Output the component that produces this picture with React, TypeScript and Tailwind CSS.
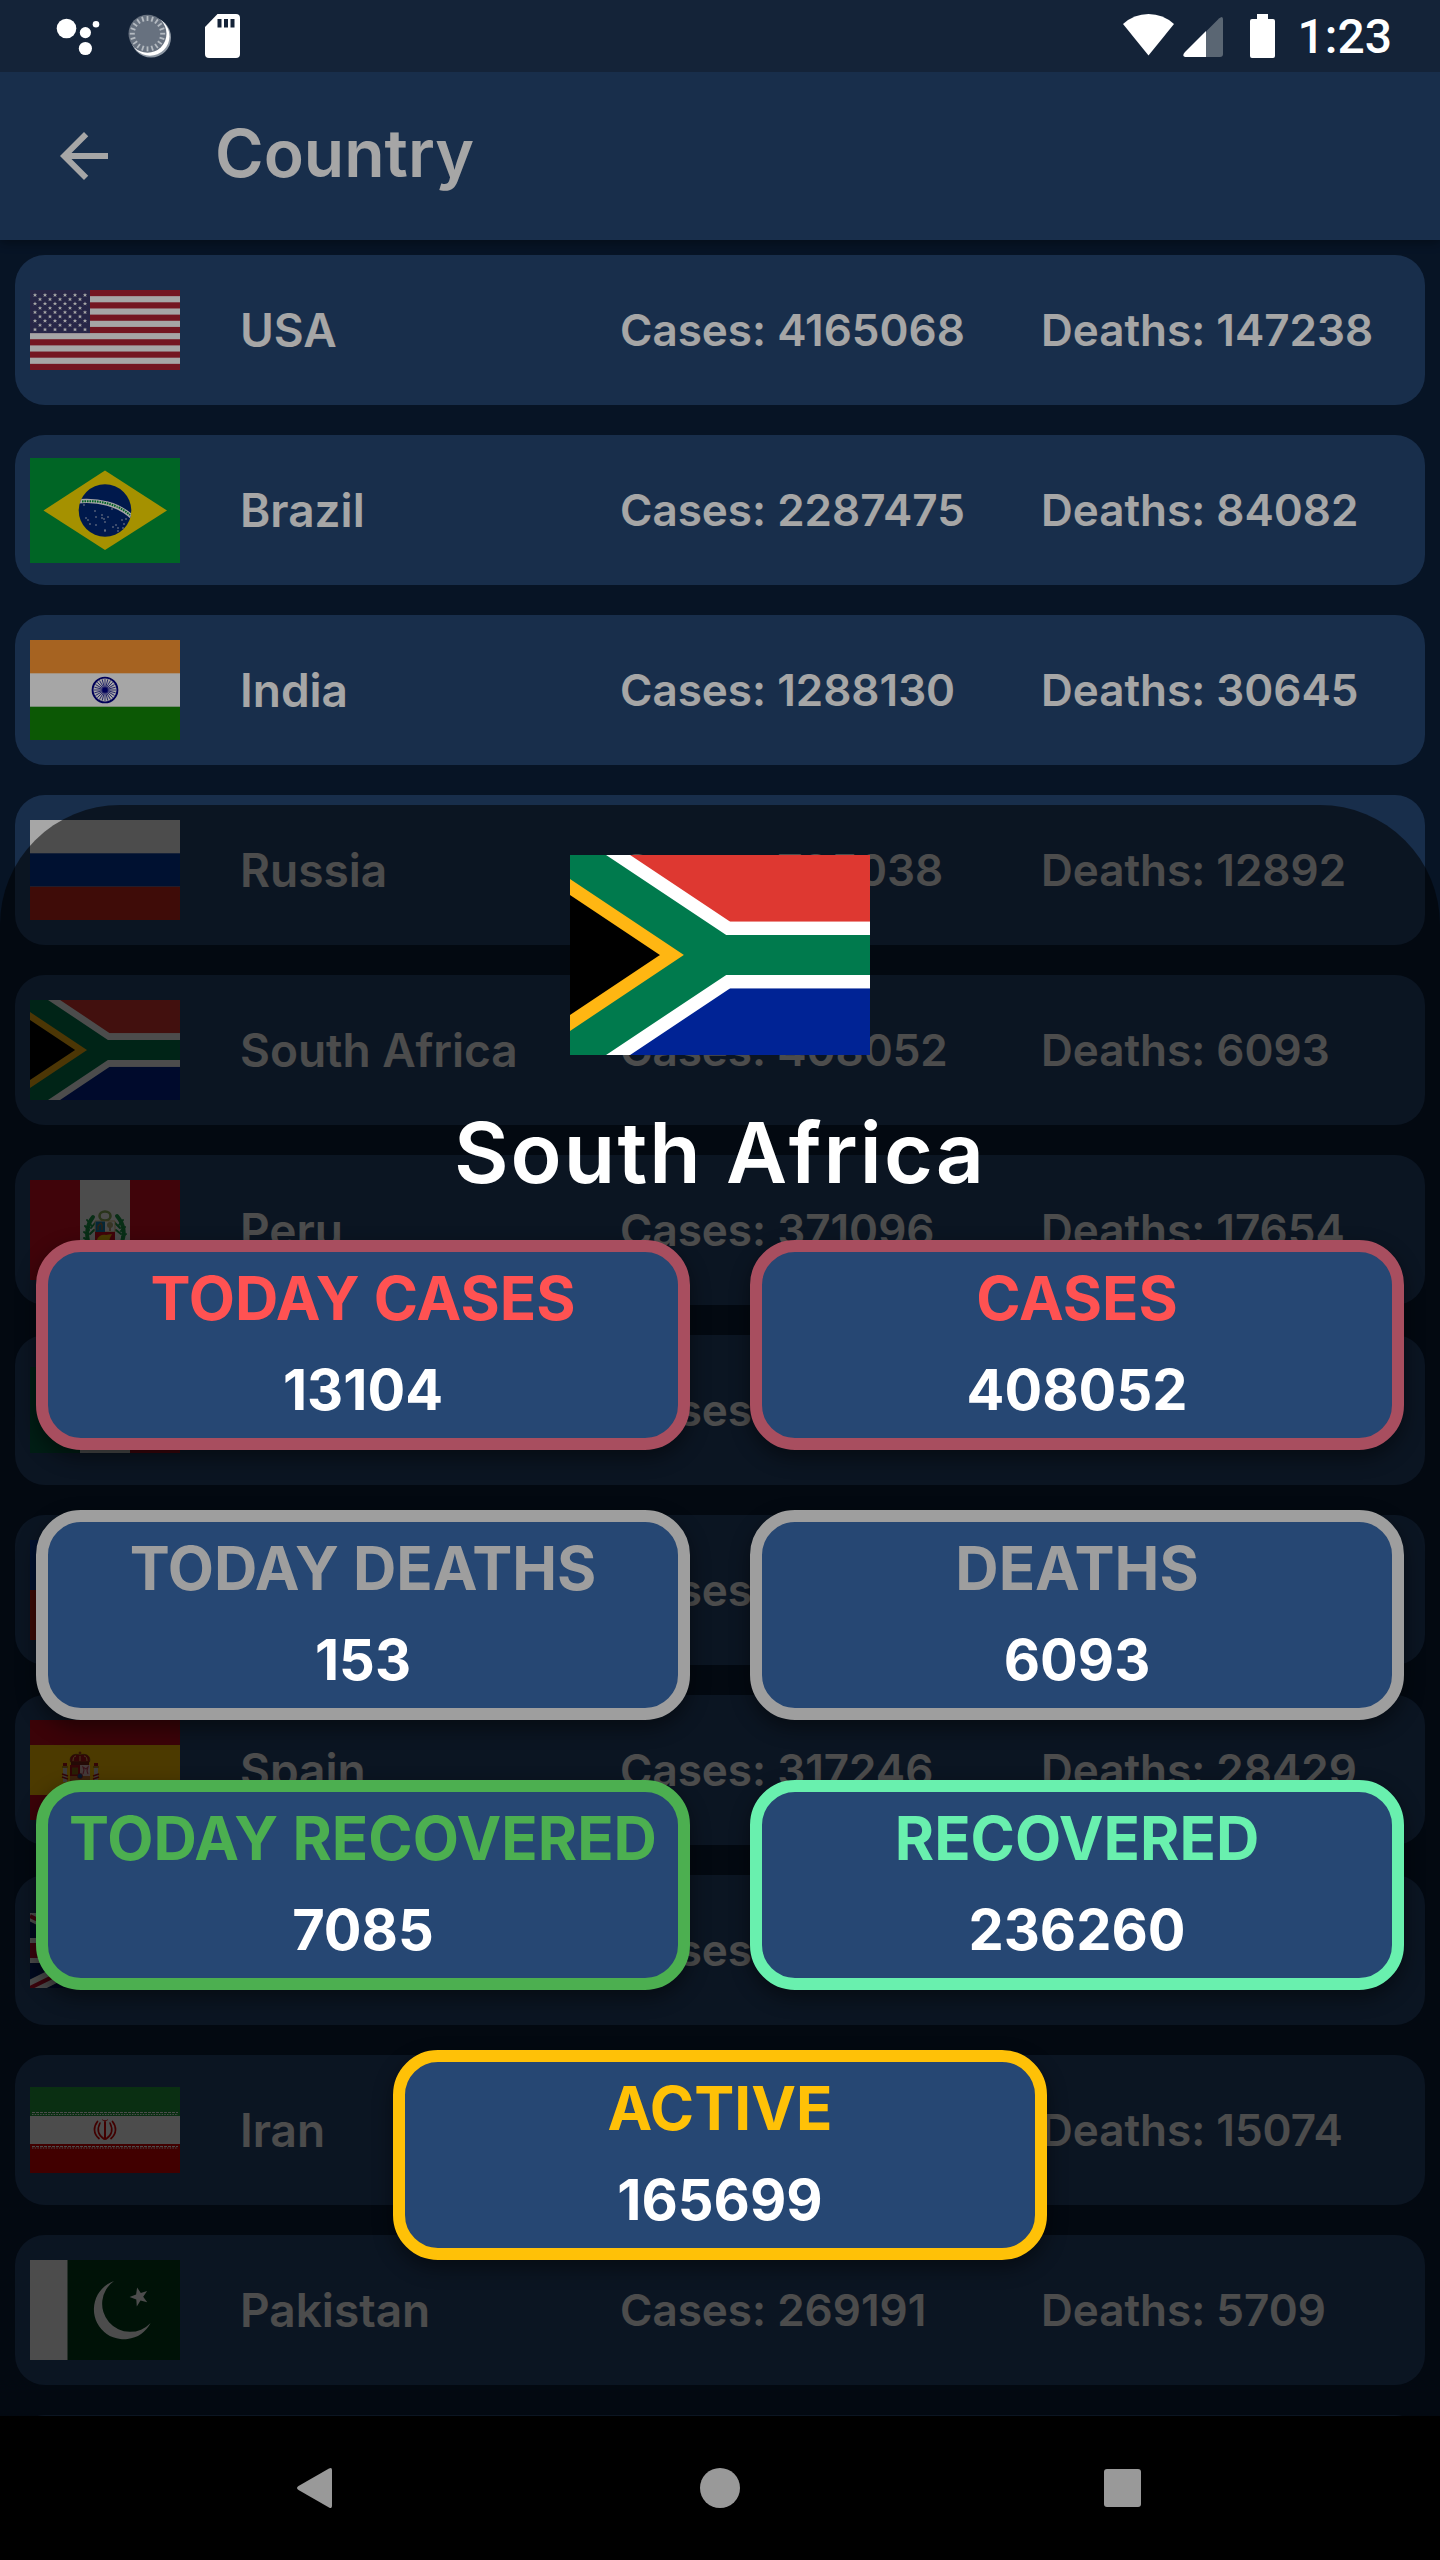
import React from "react";

type Country = {
  name: string;
  cases: number;
  deaths: number;
  flag: React.ReactNode;
};

function Flag({ height, children }: { height: number; children: React.ReactNode }) {
  return (
    <svg
      className="w-[150px] shrink-0"
      viewBox={`0 0 150 ${height}`}
      height={height}
      aria-hidden="true"
    >
      {children}
    </svg>
  );
}

function UsaFlag() {
  const stripe = 80 / 13;
  const stars: React.ReactNode[] = [];
  for (let row = 0; row < 9; row++) {
    const count = row % 2 === 0 ? 6 : 5;
    for (let col = 0; col < count; col++) {
      const x = 5 + col * 10 + (row % 2 === 0 ? 0 : 5);
      const y = 5 + row * 4.3;
      stars.push(
        <path
          key={`${row}-${col}`}
          d={`M${x} ${y - 2}l.6 1.3h1.4l-1 1 .5 1.6-1.5-.9-1.5.9.5-1.6-1-1h1.4z`}
          fill="#fff"
        />
      );
    }
  }
  return (
    <Flag height={80}>
      <rect width="150" height="80" fill="#fff" />
      {[0, 2, 4, 6, 8, 10, 12].map((i) => (
        <rect key={i} y={i * stripe} width="150" height={stripe} fill="#b22234" />
      ))}
      <rect width="60" height={stripe * 7} fill="#3c3b6e" />
      {stars}
    </Flag>
  );
}

const brazilStars = [
  [54, 47], [56, 60], [58, 62], [65, 53], [66, 59], [60, 66], [66, 67], [72, 57], [74, 61], [78, 59],
  [75, 64], [75, 72], [75, 73], [82, 51], [87, 48], [83, 69], [86, 67], [88, 70], [92, 62], [94, 66],
  [96, 61], [88, 73], [72, 60], [93, 70],
];

function BrazilFlag() {
  return (
    <Flag height={105}>
      <rect width="150" height="105" fill="#009b3a" />
      <path d="M75 12.5 137 52.5 75 92 13.5 52.5z" fill="#fedf00" />
      <clipPath id="globe">
        <circle cx="75" cy="52.5" r="26.3" />
      </clipPath>
      <circle cx="75" cy="52.5" r="26.3" fill="#002776" />
      <g clipPath="url(#globe)">
        <path d="M46 43.5C68 41 89 46 103 60" fill="none" stroke="#fff" strokeWidth="4.4" />
        <path
          d="M52 43.4C69 42 88 46 100 57"
          fill="none"
          stroke="#009b3a"
          strokeWidth="2"
          strokeDasharray="1.6 .9"
        />
      </g>
      {brazilStars.map(([x, y]) => (
        <circle key={`${x}-${y}`} cx={x} cy={y} r=".7" fill="#fff" />
      ))}
    </Flag>
  );
}

function IndiaFlag() {
  return (
    <Flag height={100}>
      <rect width="150" height="100" fill="#fff" />
      <rect width="150" height="33.3" fill="#ff9933" />
      <rect y="66.7" width="150" height="33.3" fill="#138808" />
      <g stroke="#000088" fill="none">
        <circle cx="75" cy="50" r="12.4" strokeWidth="1.9" />
        {Array.from({ length: 24 }, (_, i) => (
          <path key={i} d="M75 50V39" strokeWidth=".7" transform={`rotate(${i * 15} 75 50)`} />
        ))}
      </g>
      <circle cx="75" cy="50" r="2.6" fill="#000088" />
    </Flag>
  );
}

function RussiaFlag() {
  return (
    <Flag height={100}>
      <rect width="150" height="100" fill="#fff" />
      <rect y="33.3" width="150" height="33.4" fill="#0039a6" />
      <rect y="66.7" width="150" height="33.3" fill="#d52b1e" />
    </Flag>
  );
}

function SouthAfricaArt() {
  return (
    <>
      <clipPath id="hoist">
        <path d="M0 0 45 30 0 60z" />
      </clipPath>
      <rect width="90" height="30" fill="#de3831" />
      <rect y="30" width="90" height="30" fill="#002395" />
      <path d="M0 0 45 30 0 60z" fill="#000" />
      <g fill="none" stroke="#fff" strokeWidth="20">
        <path d="M-9-6 45 30H92" />
        <path d="M-9 66 45 30H92" />
      </g>
      <path
        d="M-9-6 45 30-9 66"
        fill="#000"
        stroke="#ffb612"
        strokeWidth="20"
        clipPath="url(#hoist)"
      />
      <path d="M-9-6 45 30H92M-9 66 45 30" fill="none" stroke="#007a4d" strokeWidth="12" />
    </>
  );
}

function SouthAfricaFlag() {
  return (
    <svg className="h-[100px] w-[150px] shrink-0" viewBox="0 0 90 60" aria-hidden="true">
      <SouthAfricaArt />
    </svg>
  );
}

function PeruFlag() {
  return (
    <Flag height={100}>
      <rect width="150" height="100" fill="#d91023" />
      <rect x="50" width="50" height="100" fill="#fff" />
      <g fill="none" stroke="#1c9a4a" strokeLinecap="round">
        <path d="M63 37c-5 6-8 16-4 27" strokeWidth="4" />
        <path d="M87 36c6 7 9 17 4 28" strokeWidth="4" />
        <path
          d="M57 40l4 5M55 46l4 4M54 52l4 3M54 58l4 2M65 43l-4 5M64 50l-4 4M93 40l-4 5M95 47l-4 4M96 54l-4 3M85 43l5 5M86 50l5 4"
          strokeWidth="2"
        />
      </g>
      <ellipse cx="75" cy="36" rx="5.5" ry="4.5" fill="none" stroke="#8cae5c" strokeWidth="2.6" />
      <path d="M65 41h20v11H65z" fill="#fff" stroke="#d8b25c" strokeWidth=".8" />
      <path d="M65.500 41.500H75V52h-9.500z" fill="#1383b8" />
      <path d="M68 50v-4l3-3 1 2v5" fill="none" stroke="#a9713a" strokeWidth="1.3" />
      <path d="M80 51v-7" stroke="#9a6b35" strokeWidth="1.2" />
      <circle cx="80" cy="45" r="3" fill="#b9b27a" />
      <path d="M65 52h20v8c0 6-6 9-10 10-4-1-10-4-10-10z" fill="#d91023" />
      <path d="M67 60c1-4 5-6 9-5l6-1-2 4c-1 4-4 6-8 6-3 0-5-1-5-4z" fill="#f4c20d" />
    </Flag>
  );
}

function MexicoFlag() {
  return (
    <Flag height={86}>
      <rect width="50" height="86" fill="#006847" />
      <rect x="50" width="50" height="86" fill="#fff" />
      <rect x="100" width="50" height="86" fill="#ce1126" />
      <circle cx="75" cy="43" r="10" fill="none" stroke="#7b5a33" strokeWidth="3" />
    </Flag>
  );
}

function ChileFlag() {
  return (
    <Flag height={100}>
      <rect width="150" height="50" fill="#fff" />
      <rect y="50" width="150" height="50" fill="#d52b1e" />
      <rect width="50" height="50" fill="#0039a6" />
      <path d="M25 13l3 8.500h9l-7 5.500 2.500 8.500-7.500-5-7.500 5L20 27l-7-5.500h9z" fill="#fff" />
    </Flag>
  );
}

function SpainFlag() {
  return (
    <Flag height={100}>
      <rect width="150" height="100" fill="#c60b1e" />
      <rect y="25" width="150" height="50" fill="#ffc400" />
      <path d="M50 31.500v3M48.600 33h2.800" stroke="#8f1e1a" strokeWidth="1" />
      <path d="M40.500 42c-2-7 5-9 9.500-7 4.500-2 11.500 0 9.500 7z" fill="#ad1519" stroke="#6b4a12" strokeWidth=".7" />
      <path d="M43 41c0-3 1-5 3-5M50 41v-5M57 41c0-3-1-5-3-5" fill="none" stroke="#e8c25a" strokeWidth="1" />
      <path d="M41 42h18v3H41z" fill="#7c2417" />
      <path d="M40 45h10v11H40z" fill="#ad1519" />
      <path d="M42 47.500h6v7h-6z" fill="#8a6a14" />
      <path d="M50 45h10v11H50z" fill="#e6c3c0" />
      <path d="M53 54l1-4-1-3 3 2 2-2-1 4 1 3" fill="none" stroke="#c4425a" strokeWidth="1.1" />
      <path d="M40 56h20v6c0 6-6 8-10 9-4-1-10-3-10-9z" fill="#c8762a" />
      <circle cx="50" cy="56" r="2.600" fill="#17508f" stroke="#ad1519" strokeWidth=".6" />
      <path d="M33 48h4v14h-4zM64 48h4v14h-4z" fill="#cfc9c4" />
      <path d="M32 54l6 2M32 57l6 2M69 54l-6 2M69 57l-6 2" stroke="#ad1519" strokeWidth="1.5" />
      <path d="M33 43h4v3h-4zM64 43h4v3h-4z" fill="#ad1519" />
      <path d="M32 46h6v2h-6zM63 46h6v2h-6z" fill="#b98d16" />
    </Flag>
  );
}

function UkFlag() {
  return (
    <Flag height={75}>
      <rect width="150" height="75" fill="#012169" />
      <path d="M0 0l150 75M150 0 0 75" stroke="#fff" strokeWidth="15" />
      <path d="M0 3l75 37M150 0 75 38M150 72 75 36M0 75l75-37" stroke="#c8102e" strokeWidth="4" />
      <path d="M75 0v75M0 37.500h150" stroke="#fff" strokeWidth="25" />
      <path d="M75 0v75M0 37.500h150" stroke="#c8102e" strokeWidth="15" />
    </Flag>
  );
}

function IranFlag() {
  return (
    <Flag height={86}>
      <rect width="150" height="86" fill="#fff" />
      <rect width="150" height="29" fill="#239f40" />
      <rect y="57" width="150" height="29" fill="#da0000" />
      <g fill="none" stroke="#fff" strokeWidth="1.200">
        <path d="M2 25.500h146M2 59.500h146" strokeDasharray="3 1" />
        <path d="M2 27.500h146M2 61h146" strokeDasharray="1.500 1.200" />
      </g>
      <g fill="none" stroke="#da0000" strokeLinecap="round">
        <path d="M75 35v17" strokeWidth="2" />
        <path d="M72.500 33c1 1.200 4 1.200 5 0" strokeWidth="1" />
        <path d="M70 36c-3 6-2 12 4 16M80 36c3 6 2 12-4 16" strokeWidth="1.600" />
        <path d="M67.500 34.500c-4 5-4.500 12 1.500 17M82.500 34.500c4 5 4.500 12-1.500 17" strokeWidth="1.700" />
      </g>
    </Flag>
  );
}

function PakistanFlag() {
  return (
    <Flag height={100}>
      <rect width="150" height="100" fill="#00401a" />
      <rect width="37.500" height="100" fill="#fff" />
      <path d="M84 21A30 30 0 1 0 120.600 63 28 28 0 1 1 84 21z" fill="#fff" />
      <path
        d="M107.100 27.500l3.700 5.600 6.300-2-3.900 5.600 4 5.600-6.700-1.800-3.700 5.900-.5-7-6.700-2.300 6.500-2.500z"
        fill="#fff"
      />
    </Flag>
  );
}

const countries: Country[] = [
  { name: "USA", cases: 4165068, deaths: 147238, flag: <UsaFlag /> },
  { name: "Brazil", cases: 2287475, deaths: 84082, flag: <BrazilFlag /> },
  { name: "India", cases: 1288130, deaths: 30645, flag: <IndiaFlag /> },
  { name: "Russia", cases: 795038, deaths: 12892, flag: <RussiaFlag /> },
  { name: "South Africa", cases: 408052, deaths: 6093, flag: <SouthAfricaFlag /> },
  { name: "Peru", cases: 371096, deaths: 17654, flag: <PeruFlag /> },
  { name: "Mexico", cases: 370712, deaths: 41908, flag: <MexicoFlag /> },
  { name: "Chile", cases: 338759, deaths: 8838, flag: <ChileFlag /> },
  { name: "Spain", cases: 317246, deaths: 28429, flag: <SpainFlag /> },
  { name: "UK", cases: 297146, deaths: 45554, flag: <UkFlag /> },
  { name: "Iran", cases: 286523, deaths: 15074, flag: <IranFlag /> },
  { name: "Pakistan", cases: 269191, deaths: 5709, flag: <PakistanFlag /> },
];

type Stat = { label: string; value: number; border: string; text: string };

const stats: Stat[] = [
  { label: "TODAY CASES", value: 13104, border: "border-[#a84e5f]", text: "text-[#ff5252]" },
  { label: "CASES", value: 408052, border: "border-[#a84e5f]", text: "text-[#ff5252]" },
  { label: "TODAY DEATHS", value: 153, border: "border-[#9e9e9e]", text: "text-[#9e9e9e]" },
  { label: "DEATHS", value: 6093, border: "border-[#9e9e9e]", text: "text-[#9e9e9e]" },
  { label: "TODAY RECOVERED", value: 7085, border: "border-[#4caf50]", text: "text-[#4caf50]" },
  { label: "RECOVERED", value: 236260, border: "border-[#69f0ae]", text: "text-[#69f0ae]" },
];

const active: Stat = {
  label: "ACTIVE",
  value: 165699,
  border: "border-[#ffc107]",
  text: "text-[#ffc107]",
};

function StatCard({ stat }: { stat: Stat }) {
  return (
    <div
      className={`flex h-[210px] flex-col items-center justify-center whitespace-nowrap rounded-[45px] border-[12px] bg-[#264773] pb-[2px] shadow-[0_8px_20px_rgba(0,0,0,0.45)] ${stat.border}`}
    >
      <div className={`text-[60px] leading-[92px] font-bold ${stat.text}`}>{stat.label}</div>
      <div className="text-[56px] leading-[92px] font-bold text-white">{stat.value}</div>
    </div>
  );
}

function StatusBar() {
  const ticks = Array.from({ length: 20 }, (_, i) => i * 18);
  return (
    <div className="flex h-[72px] shrink-0 items-center justify-between bg-[#142338] pr-[48px] text-white">
      <svg width="250" height="72" viewBox="0 0 250 72" aria-hidden="true">
        <g fill="#fff">
          <circle cx="66.500" cy="28.500" r="9.800" />
          <circle cx="85.400" cy="32.600" r="5.600" />
          <circle cx="96" cy="24.300" r="3.300" />
          <circle cx="85.400" cy="48.500" r="6.600" />
        </g>
        <circle cx="151" cy="37.500" r="20" fill="#8d97a3" />
        <circle cx="150" cy="36.300" r="19.500" fill="#fff" />
        <circle cx="147.500" cy="33.700" r="19" fill="#67717f" />
        {ticks.map((angle) => (
          <path
            key={angle}
            d="M147.500 16v5"
            stroke="#b4bac1"
            strokeWidth="1.800"
            transform={`rotate(${angle} 147.500 33.700)`}
          />
        ))}
        <path
          d="M217.500 14H236q4 0 4 4v36q0 4-4 4h-27q-4 0-4-4V27z"
          fill="#fff"
        />
        <path d="M217.500 19h4v8.500h-4zM224 19h4v8.500h-4zM230.500 19h4v8.500h-4z" fill="#142338" />
      </svg>
      <div className="flex items-center gap-[21px]">
        <svg width="156" height="72" viewBox="1121 0 156 72" aria-hidden="true">
          <path d="M1148.500 55.500 1123 24q11-10 25.500-10t25.500 10z" fill="#fff" />
          <path d="M1206 31.500 1219 18.500q4-3.500 4 1V54q0 3-3 3h-14z" fill="#5a6673" />
          <path d="M1206 31v26h-21q-3.500-1 0-5z" fill="#fff" />
          <path d="M1257 14h11v5h5q2 0 2 2v35q0 2-2 2h-21q-2 0-2-2V21q0-2 2-2h5z" fill="#fff" />
        </svg>
        <span className="pt-[2px] font-['Roboto',sans-serif] text-[48px] leading-[70px] font-medium">1:23</span>
      </div>
    </div>
  );
}

function AppBar() {
  return (
    <header className="relative z-10 flex h-[168px] shrink-0 items-center bg-[#264773] pl-[48px] shadow-[0_2px_10px_rgba(0,0,0,0.4)]">
      <button type="button" aria-label="Back" className="mr-[95px] size-[72px]">
        <svg viewBox="0 0 24 24" className="size-[72px]" fill="#fff" aria-hidden="true">
          <path d="M20 11H7.830l5.590-5.590L12 4l-8 8 8 8 1.410-1.410L7.830 13H20v-2z" />
        </svg>
      </button>
      <h1 className="pb-[6px] text-[66px] leading-[80px] font-semibold text-white">Country</h1>
    </header>
  );
}

function CountryRow({ country }: { country: Country }) {
  return (
    <li className="grid h-[150px] shrink-0 grid-cols-[210px_380fr_421fr_369fr] items-center rounded-[30px] bg-[#264773] px-[15px] text-[44px] leading-[60px] font-semibold whitespace-nowrap text-white">
      {country.flag}
      <span className="text-[46px]">{country.name}</span>
      <span>Cases: {country.cases}</span>
      <span>Deaths: {country.deaths}</span>
    </li>
  );
}

function DetailSheet() {
  return (
    <section
      role="dialog"
      aria-labelledby="sheet-title"
      className="absolute inset-x-0 bottom-0 flex flex-col items-center rounded-t-[120px] bg-black/54 px-[36px] pt-[50px] pb-[156px]"
    >
      <svg className="h-[200px] w-[300px]" viewBox="0 0 90 60" role="img" aria-label="Flag of South Africa">
        <SouthAfricaArt />
      </svg>
      <h2
        id="sheet-title"
        className="pt-[10px] text-[84px] leading-[175px] font-semibold tracking-wide text-white"
      >
        South Africa
      </h2>
      <div className="grid w-full grid-cols-2 gap-[60px]">
        {stats.map((stat) => (
          <StatCard key={stat.label} stat={stat} />
        ))}
        <div className="col-span-2 w-[calc(50%-30px)] justify-self-center">
          <StatCard stat={active} />
        </div>
      </div>
    </section>
  );
}

function NavBar() {
  return (
    <nav className="grid h-[144px] shrink-0 grid-cols-3 place-items-center bg-black px-[116px]">
      <button type="button" aria-label="Back">
        <svg width="48" height="48" viewBox="0 0 48 48" fill="#999" aria-hidden="true">
          <path d="M5.500 22 36 4.500q3-1.500 3 1.500v36q0 3-3 1.500L5.500 26q-3-2 0-4z" />
        </svg>
      </button>
      <button type="button" aria-label="Home">
        <svg width="48" height="48" viewBox="0 0 48 48" fill="#999" aria-hidden="true">
          <circle cx="24" cy="24" r="20" />
        </svg>
      </button>
      <button type="button" aria-label="Recent apps">
        <svg width="48" height="48" viewBox="0 0 48 48" fill="#999" aria-hidden="true">
          <rect x="5" y="5" width="37" height="38" rx="3" />
        </svg>
      </button>
    </nav>
  );
}

export default function App() {
  return (
    <div className="flex h-screen flex-col overflow-hidden bg-black font-['Inter',sans-serif]">
      <StatusBar />
      <div className="relative flex min-h-0 flex-1 flex-col overflow-hidden">
        <AppBar />
        <main className="min-h-0 flex-1 overflow-hidden bg-[#0b1f3a] px-[15px] pt-[15px]">
          <ul className="flex flex-col gap-[30px]">
            {countries.map((country) => (
              <CountryRow key={country.name} country={country} />
            ))}
            <li aria-hidden="true" className="h-[150px] shrink-0 rounded-[30px] bg-[#264773]" />
          </ul>
        </main>
        <div className="absolute inset-0 z-20 bg-black/35">
          <DetailSheet />
        </div>
      </div>
      <NavBar />
    </div>
  );
}
